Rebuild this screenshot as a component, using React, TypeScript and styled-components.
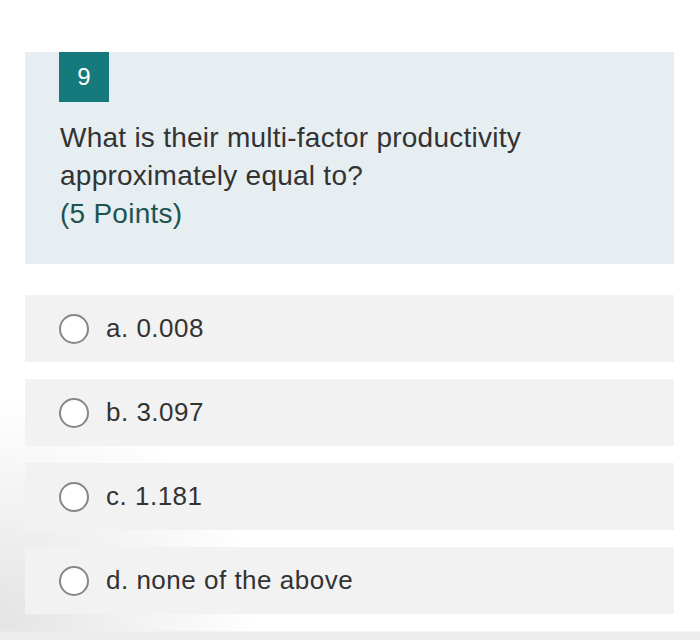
import React from "react";
import styled, { createGlobalStyle } from "styled-components";

const Global = createGlobalStyle`
  html, body { margin: 0; padding: 0; }
  body {
    width: 700px;
    height: 640px;
    overflow: hidden;
    font-family: "Liberation Sans", Arial, Helvetica, sans-serif;
    background:
      linear-gradient(to bottom, transparent 631px, #ececec 632px),
      radial-gradient(ellipse 260px 220px at 0px 620px, #e4e4e4 0%, rgba(255,255,255,0) 100%),
      #ffffff;
  }
`;

const Page = styled.div`
  padding: 52px 26px 0 25px;
  display: flex;
  flex-direction: column;
`;

const QuestionPanel = styled.section`
  background: #e6eef1;
  height: 212px;
  box-sizing: border-box;
  padding: 0 34px;
  display: flex;
  flex-direction: column;
`;

const Badge = styled.div`
  width: 50px;
  height: 50px;
  background: #167a7c;
  color: #ffffff;
  font-size: 24px;
  display: flex;
  align-items: center;
  justify-content: center;
`;

const QuestionText = styled.div`
  margin-top: 17px;
  font-size: 28px;
  letter-spacing: 0.25px;
  line-height: 38px;
  color: #333333;
  padding-left: 1px;
`;

const Points = styled.div`
  color: #1d5452;
`;

const Options = styled.div`
  margin-top: 31px;
  display: flex;
  flex-direction: column;
  gap: 17px;
`;

const OptionRow = styled.label`
  height: 67px;
  background: #f2f2f2;
  display: flex;
  align-items: center;
  padding-left: 34px;
  gap: 17px;
  cursor: pointer;
`;

const Radio = styled.span`
  width: 26px;
  height: 26px;
  border: 2px solid #878787;
  border-radius: 50%;
  background: #ffffff;
  flex: none;
`;

const OptionText = styled.span`
  font-size: 26px;
  letter-spacing: 0.5px;
  color: #333333;
`;

const options = ["a. 0.008", "b. 3.097", "c. 1.181", "d. none of the above"];

export default function App() {
  return (
    <>
      <Global />
      <Page>
        <QuestionPanel>
          <Badge>9</Badge>
          <QuestionText>
            What is their multi-factor productivity
            <br />
            approximately equal to?
            <Points>(5 Points)</Points>
          </QuestionText>
        </QuestionPanel>
        <Options>
          {options.map((o) => (
            <OptionRow key={o}>
              <Radio />
              <OptionText>{o}</OptionText>
            </OptionRow>
          ))}
        </Options>
      </Page>
    </>
  );
}
